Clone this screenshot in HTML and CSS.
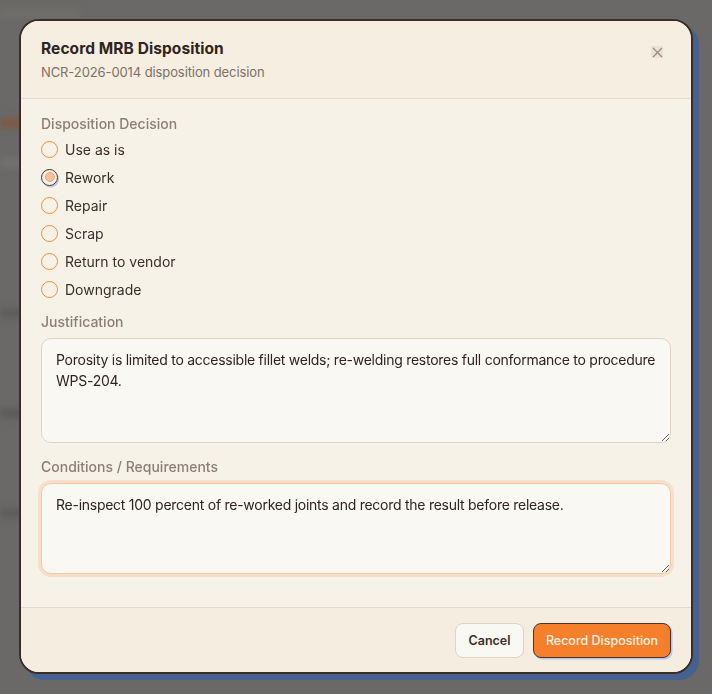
FILE: index.html
```html
<!DOCTYPE html>
<html lang="en">
<head>
<meta charset="utf-8">
<title>Record MRB Disposition</title>
<link rel="stylesheet" href="styles.css">
</head>
<body>
<div class="page">
  <div class="page-bar bar-top"></div>
  <div class="page-bar bar-orange"></div>
  <div class="page-bar bar-light"></div>
  <div class="page-bar bar-mid"></div>
  <div class="page-bar bar-mid2"></div>
  <div class="page-bar bar-mid3"></div>
</div>
<div class="overlay">
  <div class="dialog">
    <div class="dialog-header">
      <div class="header-text">
        <h2 class="dialog-title">Record MRB Disposition</h2>
        <p class="dialog-subtitle">NCR-2026-0014 disposition decision</p>
      </div>
      <button class="close-btn" aria-label="Close">
        <svg width="11" height="11" viewBox="0 0 11 11"><path d="M1 1L10 10M10 1L1 10" stroke="#9a8a80" stroke-width="1.2" fill="none"/></svg>
      </button>
    </div>
    <div class="dialog-body">
      <div class="field-label">Disposition Decision</div>
      <div class="radio-list">
        <div class="radio-row"><span class="radio"></span><span class="radio-text">Use as is</span></div>
        <div class="radio-row"><span class="radio checked"><span class="radio-dot"></span></span><span class="radio-text">Rework</span></div>
        <div class="radio-row"><span class="radio"></span><span class="radio-text">Repair</span></div>
        <div class="radio-row"><span class="radio"></span><span class="radio-text">Scrap</span></div>
        <div class="radio-row"><span class="radio"></span><span class="radio-text">Return to vendor</span></div>
        <div class="radio-row"><span class="radio"></span><span class="radio-text">Downgrade</span></div>
      </div>
      <div class="field-label label-just">Justification</div>
      <textarea class="textarea ta-just" readonly>Porosity is limited to accessible fillet welds; re-welding restores full conformance to procedure WPS-204.</textarea>
      <div class="field-label label-cond">Conditions / Requirements</div>
      <textarea class="textarea ta-cond" readonly>Re-inspect 100 percent of re-worked joints and record the result before release.</textarea>
    </div>
    <div class="dialog-footer">
      <button class="btn btn-cancel">Cancel</button>
      <button class="btn btn-primary">Record Disposition</button>
    </div>
  </div>
</div>
</body>
</html>
```
FILE: styles.css
```css
* { box-sizing: border-box; }
html, body {
  margin: 0;
  padding: 0;
  width: 712px;
  height: 694px;
  overflow: hidden;
  background: #6a6967;
  font-family: "Inter", "Liberation Sans", sans-serif;
}
.page {
  height: 694px;
  display: flex;
  flex-direction: column;
  filter: blur(3px);
  padding-top: 8px;
}
.page-bar {
  height: 10px;
  margin-bottom: 30px;
}
.bar-top { background: #6f6e6b; width: 80px; }
.bar-orange { background: #7d5a45; width: 40px; margin-top: 70px; }
.bar-light { background: #737170; width: 30px; }
.bar-mid { background: #5e5d5b; width: 30px; margin-top: 110px; }
.bar-mid2 { background: #5c5b5a; width: 30px; margin-top: 60px; }
.bar-mid3 { background: #5e5d5b; width: 30px; margin-top: 60px; }

.overlay {
  position: fixed;
  inset: 0;
  display: flex;
  align-items: flex-start;
  padding: 19px 0 0 19px;
}
.dialog {
  width: 674px;
  height: 655px;
  border: 2px solid #3c2c26;
  border-radius: 20px;
  background: #f7f2e8;
  box-shadow: 6px 6px 0 #44618f;
  display: flex;
  flex-direction: column;
  overflow: hidden;
}
.dialog-header {
  background: #f6eee0;
  border-bottom: 1px solid #e3dbcf;
  padding: 18px 20px 0 20px;
  height: 78px;
  flex-shrink: 0;
  display: flex;
  justify-content: space-between;
  align-items: flex-start;
}
.dialog-title {
  margin: 0;
  font-size: 15.5px;
  line-height: 20px;
  font-weight: 700;
  color: #2e2420;
  letter-spacing: 0.08px;
}
.dialog-subtitle {
  margin: 4px 0 0 0;
  font-size: 13px;
  line-height: 18px;
  color: #7d716a;
  letter-spacing: -0.1px;
}
.close-btn {
  margin: 7px 8px 0 0;
  width: 12px;
  height: 12px;
  padding: 0;
  border: none;
  background: #ebe2d6;
  display: flex;
  align-items: center;
  justify-content: center;
}
.dialog-body {
  flex: 1;
  padding: 15px 20px 0 20px;
  display: flex;
  flex-direction: column;
}
.field-label {
  font-size: 14px;
  line-height: 20px;
  font-weight: 500;
  color: #8c7d75;
}
.radio-list {
  margin-top: 1px;
  display: flex;
  flex-direction: column;
}
.radio-row {
  height: 28px;
  display: flex;
  align-items: center;
}
.radio {
  width: 17px;
  height: 17px;
  border-radius: 50%;
  border: 1.5px solid #f5883a;
  margin-right: 7px;
  display: flex;
  align-items: center;
  justify-content: center;
}
.radio.checked {
  border-color: #3d322e;
  box-shadow: 1px 1.5px 0 #b3c6e8;
}
.radio-dot {
  width: 10px;
  height: 10px;
  border-radius: 50%;
  border: 1px solid #f5a06a;
  background: #f9c19d;
}
.radio-text {
  font-size: 14px;
  color: #3a2e2a;
}
.label-just { margin-top: 9px; }
.label-cond { margin-top: 14px; }
.textarea {
  display: block;
  width: 630px;
  margin-top: 6px;
  padding: 10px 14px;
  border: 1px solid #ddd4c6;
  border-radius: 10px;
  background: #faf8f3;
  font-family: "Inter", "Liberation Sans", sans-serif;
  font-size: 14px;
  line-height: 21px;
  letter-spacing: -0.26px;
  color: #2e2420;
  outline: none;
  resize: vertical;
}
.ta-just { height: 105px; }
.ta-cond {
  height: 91px;
  border-color: #f4c7a3;
  box-shadow: 0 0 0 3px #f6dfcb;
}
.dialog-footer {
  background: #f5eddf;
  border-top: 1px solid #e3dbcf;
  height: 65px;
  flex-shrink: 0;
  padding: 0 20px 0 20px;
  display: flex;
  align-items: center;
  justify-content: flex-end;
  gap: 9px;
}
.btn {
  height: 35px;
  border-radius: 8px;
  font-family: "Inter", "Liberation Sans", sans-serif;
  font-size: 12.5px;
  font-weight: 600;
  padding: 0;
  white-space: nowrap;
}
.btn-cancel {
  width: 69px;
  background: #faf8f3;
  border: 1px solid #ddd4c6;
  color: #3a2e2a;
}
.btn-primary {
  width: 138px;
  background: #f57f2b;
  border: 1px solid #4a3530;
  color: #fdf1e6;
  font-weight: 500;
  box-shadow: 1.5px 1.5px 0 #b5c7e6;
}
```
